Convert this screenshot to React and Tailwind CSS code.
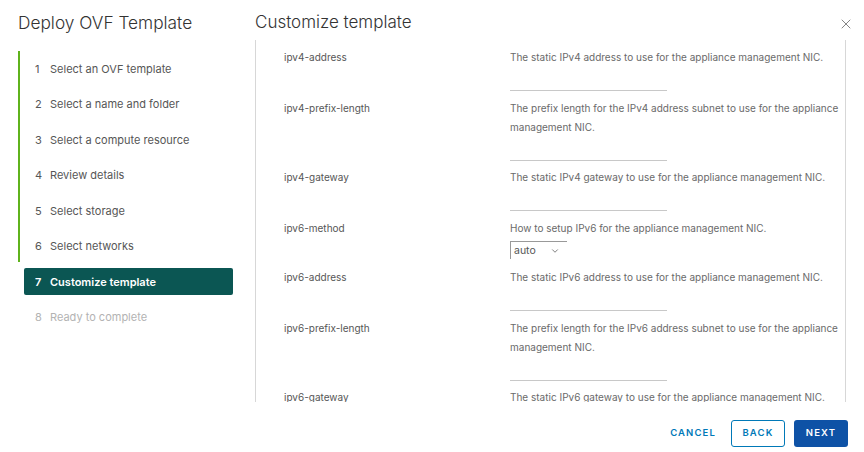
import React from "react";
import { X, ChevronDown } from "lucide-react";

const steps = [
  "Select an OVF template",
  "Select a name and folder",
  "Select a compute resource",
  "Review details",
  "Select storage",
  "Select networks",
  "Customize template",
  "Ready to complete",
];

const fields = [
  { name: "ipv4-address", desc: "The static IPv4 address to use for the appliance management NIC." },
  { name: "ipv4-prefix-length", desc: "The prefix length for the IPv4 address subnet to use for the appliance management NIC." },
  { name: "ipv4-gateway", desc: "The static IPv4 gateway to use for the appliance management NIC." },
  { name: "ipv6-method", desc: "How to setup IPv6 for the appliance management NIC.", select: true },
  { name: "ipv6-address", desc: "The static IPv6 address to use for the appliance management NIC." },
  { name: "ipv6-prefix-length", desc: "The prefix length for the IPv6 address subnet to use for the appliance management NIC." },
  { name: "ipv6-gateway", desc: "The static IPv6 gateway to use for the appliance management NIC." },
];

function Step({ n, label }) {
  const active = n === 7;
  const done = n < 7;
  return (
    <div className="h-[35.5px] flex items-center">
      <div
        className={`h-[27px] w-[209px] ml-[6px] flex items-center pl-[11px] text-[11px] ${
          active
            ? "bg-[#0b5653] text-white font-semibold rounded-[2px]"
            : done
            ? "text-[#565656]"
            : "text-[#b3b3b3]"
        }`}
      >
        <span className="w-[15px]">{n}</span>
        <span>{label}</span>
      </div>
    </div>
  );
}

function Field({ f }) {
  return (
    <div className="flex">
      <div className="w-[226px] shrink-0 text-[10px] leading-[19px] text-[#565656]">{f.name}</div>
      <div className="w-[332px] text-[10px] leading-[19px] text-[#6a6a6a]">
        <div>{f.desc}</div>
        {f.select ? (
          <div className="mt-[3px] mb-[9px] h-[18px] w-[57px] border-t border-l border-[#999] flex items-center justify-between pl-[3px] pr-[7px] text-[10.5px] text-[#555]">
            <span>auto</span>
            <ChevronDown className="w-[10px] h-[10px]" strokeWidth={1.8} />
          </div>
        ) : (
          <div className="h-[24px] w-[157px] border-b border-[#c8c8c8] mb-[7.7px]" />
        )}
      </div>
    </div>
  );
}

export default function App() {
  return (
    <div
      className="w-[864px] h-[452px] bg-white relative overflow-hidden flex flex-col"
      style={{ fontFamily: "Inter, 'Open Sans', sans-serif" }}
    >
      <div className="flex flex-1 min-h-0">
        {/* Sidebar */}
        <div className="w-[255px] shrink-0 pl-[18px] pt-[12px]">
          <h1 className="text-[17.3px] font-light text-[#333] leading-[22px]">Deploy OVF Template</h1>
          <div className="mt-[17px] relative">
            <div className="absolute left-0 top-0 w-[2px] h-[211px] bg-[#5fb31c]" />
            {steps.map((s, i) => (
              <Step key={s} n={i + 1} label={s} />
            ))}
          </div>
        </div>

        {/* Main */}
        <div className="flex flex-col flex-1 min-h-0 pr-[18px]">
          <h2 className="pt-[11px] text-[17px] font-light text-[#333] leading-[22px] h-[40px]">Customize template</h2>
          <div className="h-[362px] border-l border-r border-[#d7d7d7] overflow-hidden pl-[28px] pt-[8px]">
            {fields.map((f) => (
              <Field key={f.name} f={f} />
            ))}
          </div>
        </div>
      </div>

      <button className="absolute right-[10px] top-[16px] text-[#666]">
        <X className="w-[16px] h-[16px]" strokeWidth={1.2} />
      </button>

      {/* Footer */}
      <div className="h-[50px] flex items-start justify-end pr-[16px] pt-[18px] gap-[9px]">
        <button className="h-[27px] pl-[12px] pr-[6px] text-[9.5px] font-semibold tracking-[0.12em] text-[#0079b8]">CANCEL</button>
        <button className="h-[27px] w-[54px] border border-[#0079b8] rounded-[3px] text-[9.5px] font-semibold tracking-[0.12em] text-[#0079b8]">BACK</button>
        <button className="h-[27px] w-[54px] bg-[#0e52a6] rounded-[3px] text-[9.5px] font-semibold tracking-[0.12em] text-white">NEXT</button>
      </div>
    </div>
  );
}
